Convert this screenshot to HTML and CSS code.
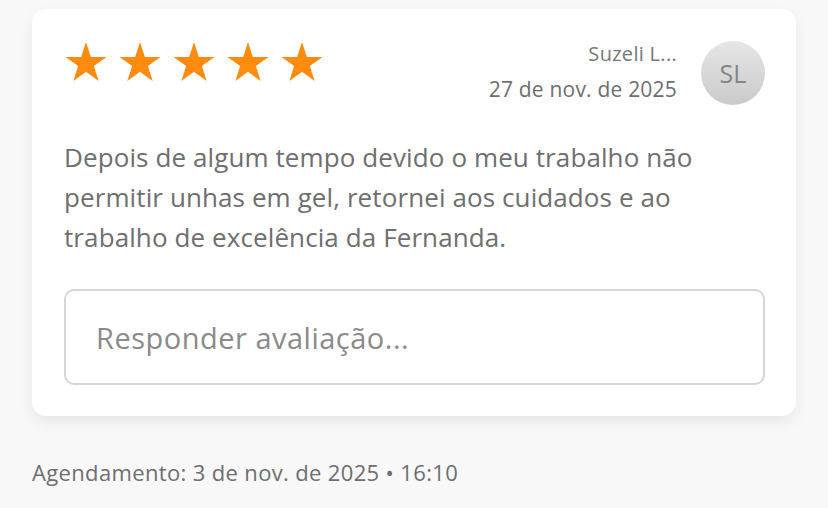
FILE: index.html
```html
<!DOCTYPE html>
<html lang="pt-BR">
<head>
<meta charset="utf-8">
<title>Avaliação</title>
<link rel="stylesheet" href="styles.css">
</head>
<body>
<main class="page">
  <article class="card">
    <header class="card-head">
      <div class="stars" aria-label="5 estrelas">
        <svg class="star" viewBox="0 0 100 95.1"><polygon points="50,0 61.8,36.3 100,36.3 69.1,58.8 80.9,95.1 50,72.6 19.1,95.1 30.9,58.8 0,36.3 38.2,36.3"/></svg>
        <svg class="star" viewBox="0 0 100 95.1"><polygon points="50,0 61.8,36.3 100,36.3 69.1,58.8 80.9,95.1 50,72.6 19.1,95.1 30.9,58.8 0,36.3 38.2,36.3"/></svg>
        <svg class="star" viewBox="0 0 100 95.1"><polygon points="50,0 61.8,36.3 100,36.3 69.1,58.8 80.9,95.1 50,72.6 19.1,95.1 30.9,58.8 0,36.3 38.2,36.3"/></svg>
        <svg class="star" viewBox="0 0 100 95.1"><polygon points="50,0 61.8,36.3 100,36.3 69.1,58.8 80.9,95.1 50,72.6 19.1,95.1 30.9,58.8 0,36.3 38.2,36.3"/></svg>
        <svg class="star" viewBox="0 0 100 95.1"><polygon points="50,0 61.8,36.3 100,36.3 69.1,58.8 80.9,95.1 50,72.6 19.1,95.1 30.9,58.8 0,36.3 38.2,36.3"/></svg>
      </div>
      <div class="author">
        <div class="author-meta">
          <div class="author-name">Suzeli L...</div>
          <div class="author-date">27 de nov. de 2025</div>
        </div>
        <div class="avatar">SL</div>
      </div>
    </header>
    <p class="review-text">Depois de algum tempo devido o meu trabalho não permitir unhas em gel, retornei aos cuidados e ao trabalho de excelência da Fernanda.</p>
    <div class="reply-box">Responder avaliação...</div>
  </article>
  <p class="appointment">Agendamento: 3 de nov. de 2025 • 16:10</p>
</main>
</body>
</html>
```

FILE: styles.css
```css
* { box-sizing: border-box; }

html, body {
  margin: 0;
  padding: 0;
  background: #f8f8f8;
}

body {
  font-family: "Open Sans", "Liberation Sans", sans-serif;
  color: #6b6b6b;
}

.page {
  padding: 9px 32px 0 32px;
}

.card {
  width: 764px;
  background: #ffffff;
  border-radius: 14px;
  box-shadow: 0 6px 14px rgba(0, 0, 0, 0.07);
  padding: 32px 31px 31px 32px;
}

.card-head {
  display: flex;
  justify-content: space-between;
  align-items: flex-start;
  height: 64px;
}

.stars {
  display: flex;
  gap: 10px;
  padding-top: 1px;
}

.star {
  width: 44px;
  height: 39px;
  fill: #ff8a0e;
}

.author {
  display: flex;
  align-items: flex-start;
  gap: 24px;
}

.author-meta {
  display: flex;
  flex-direction: column;
  align-items: flex-end;
}

.author-name {
  font-size: 20px;
  line-height: 26px;
  letter-spacing: 0.3px;
  color: #777777;
}

.author-date {
  font-size: 21px;
  line-height: 28px;
  letter-spacing: 0.2px;
  margin-top: 8px;
  color: #6e6e6e;
}

.avatar {
  width: 64px;
  height: 64px;
  border-radius: 50%;
  background: linear-gradient(#e6e6e6, #cacaca);
  display: flex;
  align-items: center;
  justify-content: center;
  font-size: 25px;
  color: #858585;
}

.review-text {
  margin: 32px 0 0 0;
  font-size: 26px;
  line-height: 40px;
  letter-spacing: 0.1px;
  color: #6e6e6e;
  max-width: 680px;
}

.reply-box {
  margin-top: 32px;
  height: 96px;
  border: 2px solid #d6d6d6;
  border-radius: 10px;
  padding: 0 30px;
  display: flex;
  align-items: center;
  font-size: 29px;
  letter-spacing: 0.5px;
  color: #8a8a8a;
}

.appointment {
  margin: 40px 0 0 0;
  font-size: 22px;
  line-height: 32px;
  letter-spacing: 0.35px;
  color: #6e6e6e;
}
```
